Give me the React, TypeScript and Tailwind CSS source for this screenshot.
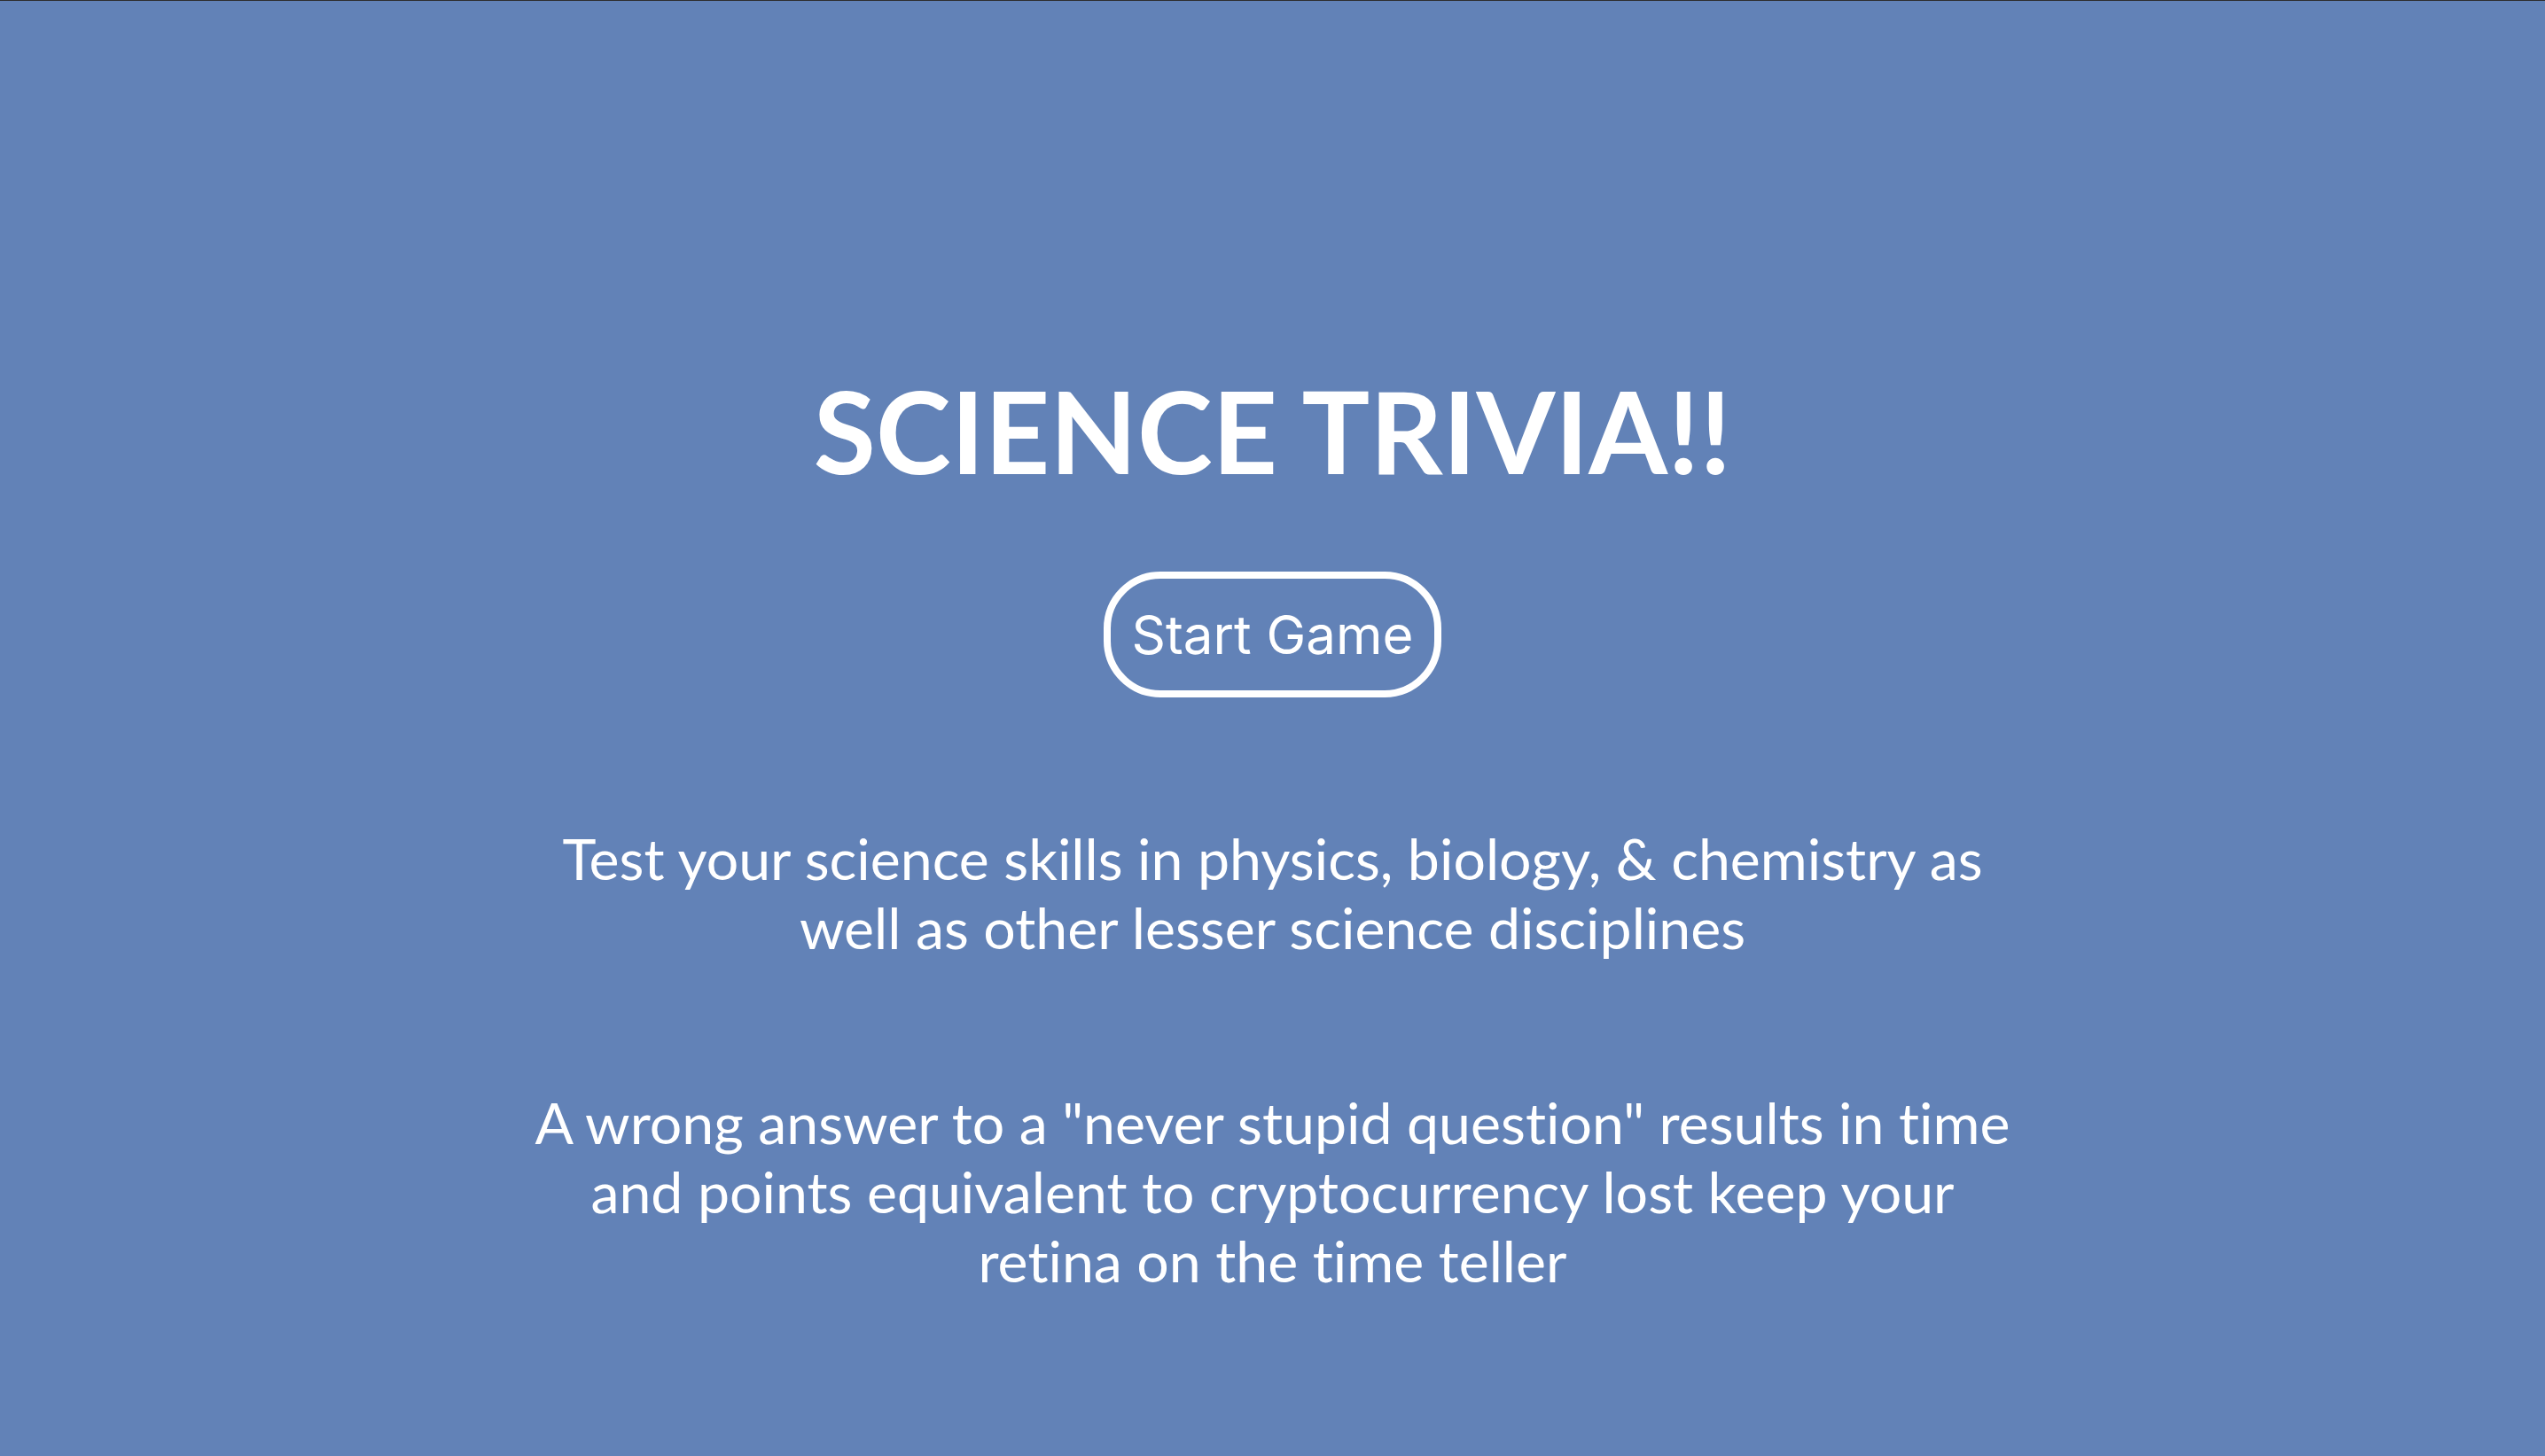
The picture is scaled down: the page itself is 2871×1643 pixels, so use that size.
const paragraphs = [
  "Test your science skills in physics, biology, & chemistry as well as other lesser science disciplines",
  'A wrong answer to a "never stupid question" results in time and points equivalent to cryptocurrency lost keep your retina on the time teller',
];

const App = () => {
  return (
    <div className="min-h-screen w-full bg-[#6282b7] border-t border-[#2e2e2e] text-white font-['Lato','Open_Sans',sans-serif] [font-variant-ligatures:none]">
      <main className="flex flex-col items-center pt-[408px] pb-[180px]">
        <h1 className="text-[128px] leading-[1.2] font-bold text-center">SCIENCE TRIVIA!!</h1>

        <button className="mt-[82px] rounded-[64px] border-[8px] border-white px-[23px] py-[27px] text-[60px] leading-[1.21] font-['Inter','Liberation_Sans',sans-serif] text-white">
          Start Game
        </button>

        {paragraphs.map((text) => (
          <p key={text} className="mt-[142px] w-[1690px] text-center text-[64.4px] leading-[78px]">
            {text}
          </p>
        ))}
      </main>
    </div>
  );
};

export default App;
